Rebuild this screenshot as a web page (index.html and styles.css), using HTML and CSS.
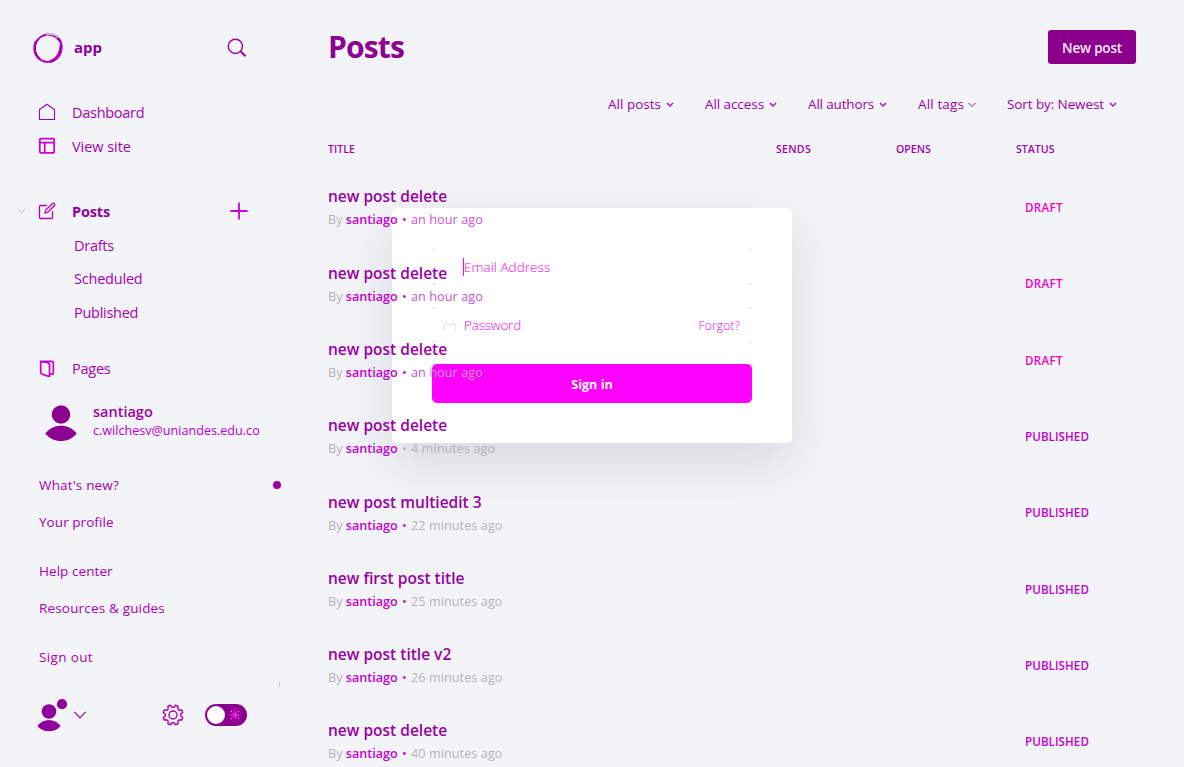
FILE: index.html
```html
<!DOCTYPE html>
<html lang="en">
<head>
<meta charset="utf-8">
<title>Posts</title>
<link rel="stylesheet" href="styles.css">
</head>
<body>
<div class="app">
  <aside class="sidebar">
    <header class="brand">
      <svg class="logo" viewBox="0 0 32 32"><circle cx="16" cy="16.500" r="13.600"/><ellipse cx="16.300" cy="16" rx="14.300" ry="13" transform="rotate(-50 16 16)"/><path d="M4 9C1.200 16 3 23 8 27.500M18 29.500c7-2 11-9 11-17" stroke-width="2.600"/><path class="logo-shade" d="M14 2.800C18 1.500 23 2 26.500 5.500"/></svg>
      <span class="brand-name">app</span>
      <svg class="icon search" viewBox="0 0 20 20"><circle cx="8.400" cy="8.300" r="7.100"/><path d="M13.600 13.400l5 4.800" stroke-width="2"/></svg>
    </header>
    <nav class="nav">
      <a class="item"><svg class="icon" viewBox="0 0 18 18"><path d="M1.500 6.500L9 1.200l7.500 5.300v10h-15z"/></svg><span>Dashboard</span></a>
      <a class="item loose"><svg class="icon strong" viewBox="0 0 18 18"><rect x="1.800" y="1.600" width="14.400" height="14.200" rx="1"/><path d="M2 5.700h14M6.700 6v10"/></svg><span>View site</span></a>
      <a class="item current"><svg class="chevron faint" viewBox="0 0 10 6"><path d="M.8.800L5 4.800 9.200.800"/></svg><svg class="icon" viewBox="0 0 18 18"><path d="M9 3.500H2.500a1 1 0 0 0-1 1v11a1 1 0 0 0 1 1h11a1 1 0 0 0 1-1V9M7 11l.8-3 6.500-6.300a1.200 1.200 0 0 1 2 2L10 10z"/></svg><span>Posts</span><svg class="plus" viewBox="0 0 18 18"><path d="M9 .5v17M.5 9h17"/></svg></a>
      <a class="item sub">Drafts</a>
      <a class="item sub short">Scheduled</a>
      <a class="item sub">Published</a>
      <a class="item pages"><svg class="icon strong" viewBox="0 0 18 18"><path d="M2.700 1.600l6.300.9q2.500.5 2.500 2v11.700l-2.500-.4-5.300-1.800q-1-.3-1-1.300zM2.700 1.300H14q1.300 0 1.300 1.300v10.600q0 1-1.300 1h-2"/></svg><span>Pages</span></a>
    </nav>
    <section class="account">
      <svg class="avatar" viewBox="0 0 32 36"><circle cx="16" cy="9.500" r="9.300"/><path d="M.3 28.500C8 18 24 18 31.700 28.500 24 38.500 8 38.500.300 28.500z"/></svg>
      <div class="who"><strong>santiago</strong><span>c.wilchesv@uniandes.edu.co</span></div>
    </section>
    <nav class="menu">
      <a class="wide"><span>What's new?</span><i class="dot"></i></a>
      <a>Your profile</a>
      <a class="gap">Help center</a>
      <a class="wide">Resources &amp; guides</a>
      <a class="gap wider">Sign out</a>
    </nav>
    <div class="tick"></div>
    <footer class="foot">
      <svg class="mini" viewBox="0 0 31 33"><circle cx="12" cy="12.500" r="7.300"/><path d="M.3 27C6 19 18 19 23.700 27 18 34 6 34 .300 27z"/><circle cx="25" cy="5.200" r="5.100"/></svg>
      <svg class="chevron open" viewBox="0 0 12 8"><path d="M.5.800L6 6.800 11.500.800"/></svg>
      <svg class="gear" viewBox="-11 -11 22 22"><circle r="4"/><path d="M7.740-.95V.95L9.760 2.600 8.750 5.050 6.150 4.800 4.800 6.150 5.050 8.750 2.600 9.760.95 7.740H-.95L-2.600 9.760-5.050 8.750-4.800 6.150-6.150 4.800-8.750 5.050-9.760 2.600-7.740.95V-.95L-9.760-2.600-8.750-5.050-6.150-4.800-4.800-6.150-5.050-8.750-2.600-9.760-.95-7.740H.95L2.600-9.760 5.050-8.750 4.800-6.150 6.150-4.800 8.750-5.050 9.760-2.600z"/></svg>
      <div class="toggle"><i class="knob"></i><svg class="sun" viewBox="-6 -6 12 12"><path class="rays" d="M0-6V6M-6 0H6M-3-3l6 6M3-3l-6 6"/><path class="sparks" d="M-4-3.500h1M3-3.500h1M-4 3.500h1M3 3.500h1M-2 0h1M1 0h1M-.5-1.500h1M-.5 1.500h1"/></svg></div>
    </footer>
  </aside>

  <main class="main">
    <header class="head"><h1>Posts</h1><button class="new">New post</button></header>
    <div class="filters">
      <a class="f1">All posts<svg class="caret" viewBox="0 0 8 6"><path d="M1 1l3 3 3-3"/></svg></a>
      <a class="f2">All access<svg class="caret" viewBox="0 0 8 6"><path d="M1 1l3 3 3-3"/></svg></a>
      <a class="f3">All authors<svg class="caret" viewBox="0 0 8 6"><path d="M1 1l3 3 3-3"/></svg></a>
      <a class="f4">All tags<svg class="caret thin" viewBox="0 0 8 6"><path d="M.5 1L4 4.500 7.500 1"/></svg></a>
      <a class="f5">Sort by: Newest<svg class="caret" viewBox="0 0 8 6"><path d="M1 1l3 3 3-3"/></svg></a>
    </div>
    <div class="cols"><span>TITLE</span><span class="sends">SENDS</span><span>OPENS</span><span>STATUS</span></div>
    <ul class="posts">
      <li><div><h3>new post delete</h3><p><span class="by">By</span> <b>santiago</b> <span class="pink"><i>•</i> an hour ago</span></p></div><em class="draft">DRAFT</em></li>
      <li><div><h3>new post delete</h3><p><span class="by">By</span> <b>santiago</b> <span class="pink"><i>•</i> an hour ago</span></p></div><em class="draft">DRAFT</em></li>
      <li><div><h3>new post delete</h3><p><span class="by">By</span> <b>santiago</b> <span class="pink"><i>•</i> an <span class="over">hour ago</span></span></p></div><em class="draft">DRAFT</em></li>
      <li><div><h3>new post delete</h3><p><span class="by">By</span> <b>santiago</b> <i class="gray">•</i> 4 minutes ago</p></div><em>PUBLISHED</em></li>
      <li><div><h3>new post multiedit 3</h3><p><span class="by">By</span> <b>santiago</b> <i>•</i> 22 minutes ago</p></div><em>PUBLISHED</em></li>
      <li><div><h3>new first post title</h3><p><span class="by">By</span> <b>santiago</b> <i>•</i> 25 minutes ago</p></div><em>PUBLISHED</em></li>
      <li><div><h3>new post title v2</h3><p><span class="by">By</span> <b>santiago</b> <i>•</i> 26 minutes ago</p></div><em>PUBLISHED</em></li>
      <li><div><h3>new post delete</h3><p><span class="by">By</span> <b>santiago</b> <i>•</i> 40 minutes ago</p></div><em>PUBLISHED</em></li>
    </ul>
  </main>

  <form class="login">
    <div class="field"><svg class="hint" viewBox="0 0 14 12"><path d="M2 1.500h1M4 4h1M6.500 5.500h1M9 4h1M11 1.500h1M2 9h1M11 9h1"/></svg><span class="label email">Email Address</span></div>
    <div class="field"><svg class="hint" viewBox="0 0 14 12"><path d="M1 5.500h12M1.500 6v5.500M12.500 6v5.500M3.500 1.500v3M10.500 1.500v3M6 7.500h2"/></svg><span class="label password">Password</span><span class="forgot">Forgot?</span></div>
    <div class="signin">Sign in</div>
  </form>
</div>
</body>
</html>
```
FILE: styles.css
```css
* { box-sizing: border-box; }
body { margin: 0; background: #f2f4f8; color: #a800b4; font-family: "Open Sans", "Noto Sans", sans-serif; }
h1, h3, p, ul { margin: 0; padding: 0; }
svg { display: block; flex: none; fill: none; stroke: currentColor; overflow: visible; }
em, i { font-style: normal; }
.app { position: relative; display: flex; width: 1184px; height: 767px; overflow: hidden; }

/* Sidebar */
.sidebar { width: 320px; flex: none; display: flex; flex-direction: column; }
.brand { height: 95px; padding: 1px 73px 0 32px; display: flex; align-items: center; }
.logo { width: 32px; height: 32px; color: #b000b8; stroke-width: 1.5; }
.logo-shade { stroke: #c8b8cc; stroke-width: 1.8; }
.brand-name { flex: 1; margin: -2px 0 0 10px; font-size: 15px; font-weight: 700; color: #900098; }
.search { width: 20px; height: 20px; color: #a000a8; stroke-width: 1.5; }
.nav { display: flex; flex-direction: column; font-size: 14.5px; letter-spacing: -.28px; }
.item { height: 34px; padding: 0 72px 0 38px; display: flex; align-items: center; }
.item .icon { width: 18px; height: 18px; margin-right: 16px; stroke-width: 1.1; }
.item .strong { stroke-width: 1.7; color: #c800d0; }
.loose { letter-spacing: -.04px; }
.current { position: relative; margin-top: 31px; font-weight: 700; letter-spacing: -.16px; color: #90009a; }
.current .icon { color: #b800c0; stroke-width: 1.3; }
.current span { flex: 1; }
.plus { width: 18px; height: 18px; stroke-width: 1.8; color: #c800d0; }
.faint { position: absolute; left: 17px; top: 14px; width: 9px; height: 6px; color: #b9b4bf; }
.sub { padding-left: 74px; }
.short { height: 33px; letter-spacing: -.21px; }
.pages { height: 33px; margin-top: 23px; letter-spacing: -.24px; }
.account { display: flex; gap: 16px; margin-top: 17px; padding-left: 45px; height: 64.5px; }
.avatar { width: 32px; height: 36px; margin-top: 3px; fill: #8c0090; stroke: none; }
.who { display: flex; flex-direction: column; }
.who strong { font-size: 14.5px; line-height: 20px; font-weight: 600; color: #a000a8; }
.who span { font-size: 12.6px; line-height: 17px; color: #b800c4; }
.menu { display: flex; flex-direction: column; padding: 0 39px; font-size: 13.5px; letter-spacing: .06px; }
.menu a { height: 37px; display: flex; align-items: center; justify-content: space-between; }
.menu .gap { margin-top: 12px; }
.menu .wide { letter-spacing: .17px; }
.menu .wider { letter-spacing: .36px; }
.dot { width: 8px; height: 8px; border-radius: 50%; background: #9a00a0; }
.tick { width: 1px; height: 5px; margin: 6px 0 0 279px; background: #cbccd2; }
.foot { display: flex; align-items: center; height: 57px; padding-left: 37px; }
.mini { width: 31px; height: 33px; fill: #90009a; stroke: none; }
.open { width: 12px; height: 8px; margin-left: 6px; stroke-width: 1.2; }
.gear { width: 22px; height: 22px; margin-left: 76px; color: #b000b8; stroke-width: 1.4; stroke-linejoin: round; }
.toggle { width: 42px; height: 22px; margin-left: 21px; padding: 0 6px 0 2px; border-radius: 11px; background: #8c0090; display: flex; align-items: center; justify-content: space-between; }
.knob { width: 18px; height: 18px; border-radius: 50%; background: #fff; }
.sun { width: 12px; height: 12px; }
.rays { stroke: #c800c8; stroke-width: 1.8; }
.sparks { stroke: #f0c0f0; }

/* Posts list */
.main { position: relative; z-index: 2; width: 864px; padding: 0 48px 0 8px; }
.head { height: 94px; display: flex; align-items: center; justify-content: space-between; }
h1 { font-size: 30px; line-height: 40px; font-weight: 700; letter-spacing: -.85px; color: #8c0092; }
.new { width: 88px; height: 34px; padding: 1px 0 0; border: 0; border-radius: 3px; background: #8b008b; color: #f8e8f8; font: 600 13.5px "Open Sans", sans-serif; letter-spacing: -.18px; }
.filters { height: 20px; padding-right: 19px; display: flex; justify-content: flex-end; gap: 31px; font-size: 13.5px; line-height: 20px; color: #a000ac; }
.filters a { display: flex; align-items: center; }
.caret { width: 8px; height: 6px; margin: 2px 0 0 5px; color: #b800c0; stroke-width: 1.4; }
.thin { margin-left: 4px; stroke-width: 1; }
.f2 { letter-spacing: -.07px; }
.f3 { letter-spacing: -.16px; }
.f4 { letter-spacing: .13px; }
.f5 { letter-spacing: -.1px; }
.cols { height: 20px; margin-top: 25px; display: grid; grid-template-columns: 448px 120px 120px 120px; font-size: 10.6px; line-height: 20px; font-weight: 600; color: #a400ac; }
.sends { letter-spacing: .28px; }
.posts { margin-top: 26.4px; list-style: none; }
.posts li { height: 76.3px; display: grid; grid-template-columns: 697px 1fr; }
h3 { font-size: 15.5px; line-height: 22px; font-weight: 600; color: #9800a4; }
p { margin-top: 2px; font-size: 12.6px; line-height: 22px; letter-spacing: .1px; color: #b6b3b9; white-space: pre; }
p b { font-weight: 600; letter-spacing: 0; color: #c400d0; }
p i { margin: 0 .8px; color: #c800d0; }
p .gray { color: inherit; }
.by { letter-spacing: 0; }
.pink { color: #c653cf; }
.over { color: #cf9ccf; }
em { font-size: 11.6px; line-height: 20px; font-weight: 600; letter-spacing: .08px; margin-top: 12.8px; color: #c000cc; }
.draft { letter-spacing: .34px; color: #f000c8; }

/* Sign-in dialog */
.login { position: absolute; z-index: 1; left: 392px; top: 208px; width: 400px; height: 235px; padding: 40px; border-radius: 5px; background: #fff; box-shadow: 0 20px 50px rgba(60, 60, 70, .14); color: #f000f0; }
.field {
  --mark: radial-gradient(#dde5ec 0 1px, transparent 1.5px);
  height: 38px; margin-bottom: 20px; padding: 0 12px 0 11px; display: flex; align-items: center;
  background-image: var(--mark), var(--mark), var(--mark), var(--mark);
  background-size: 4px 4px; background-repeat: no-repeat;
  background-position: 0 0, 100% 0, 0 100%, 100% 100%;
}
.hint { width: 14px; height: 12px; color: #dfe6ef; }
.label { font-size: 13.5px; font-weight: 300; }
.email { margin-left: 6px; border-left: 1px solid #f0f; line-height: 18px; letter-spacing: .05px; }
.password { flex: 1; margin-left: 7px; letter-spacing: -.2px; }
.forgot { font-size: 12px; font-weight: 300; letter-spacing: .2px; }
.signin { height: 39px; border-radius: 5px; background: #f0f; color: #fff; text-align: center; font-size: 12.6px; font-weight: 700; line-height: 41px; }
```
